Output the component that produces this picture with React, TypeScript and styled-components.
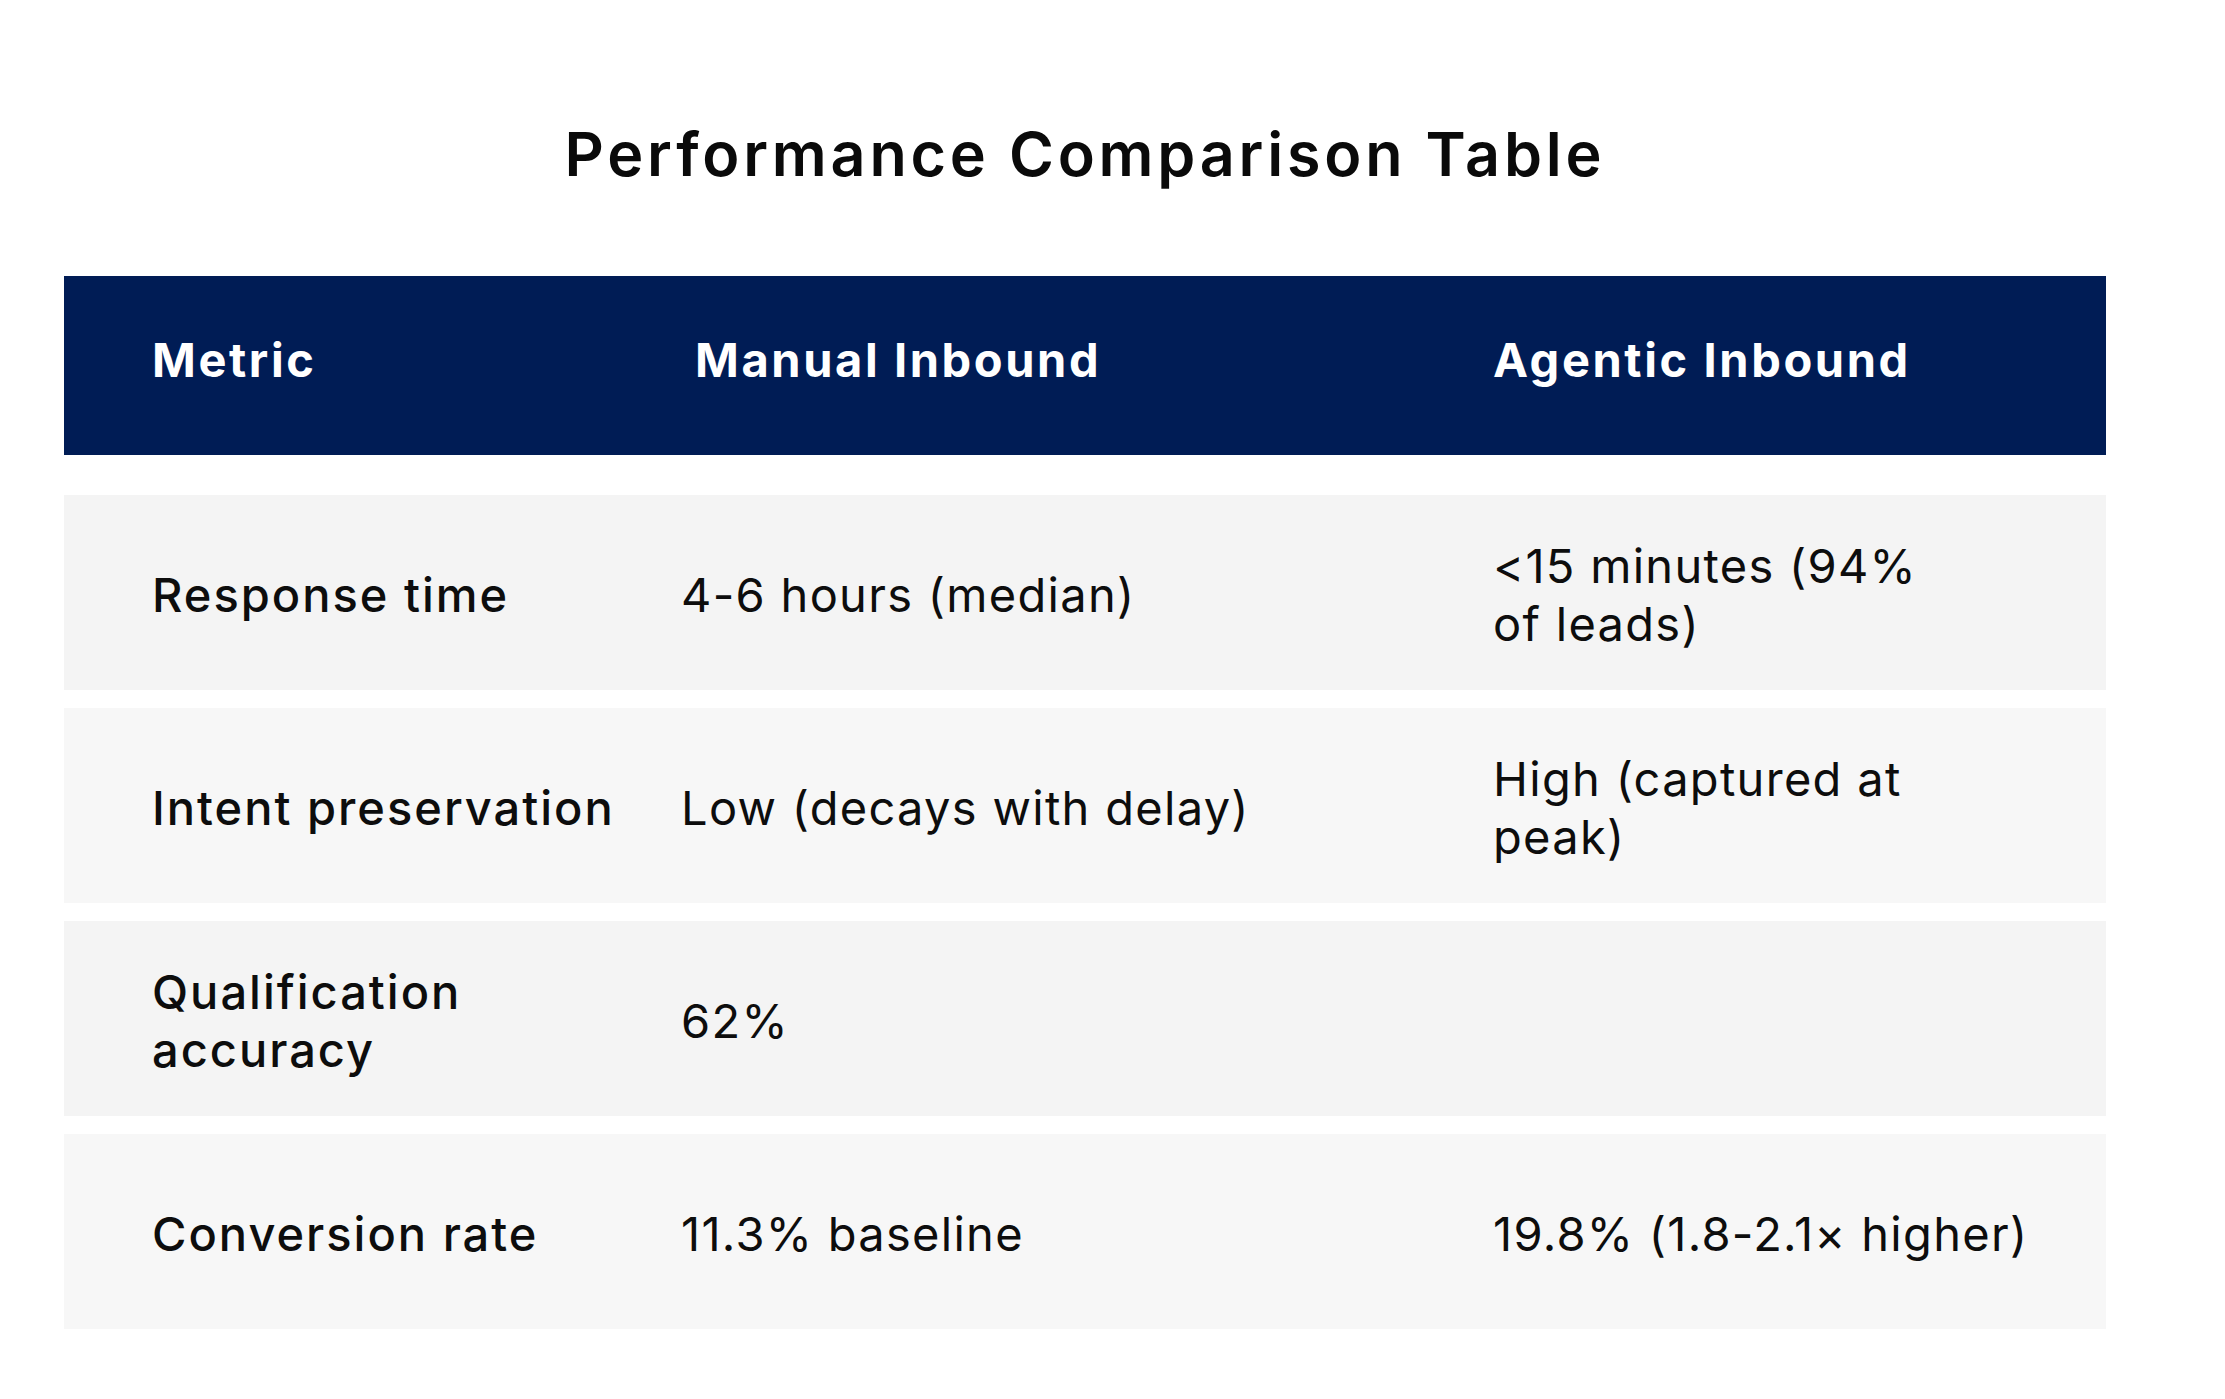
import React from "react";
import styled, { createGlobalStyle } from "styled-components";

const GlobalStyle = createGlobalStyle`
    html, body {
        margin: 0;
        padding: 0;
        background: #ffffff;
    }
    body {
        font-family: Inter, "Open Sans", "Liberation Sans", sans-serif;
        color: #111111;
    }
`;

const Page = styled.div`
    width: 2042px;
    padding: 118px 0 60px 64px;
`;

const Title = styled.h1`
    margin: 0 0 86px;
    text-align: center;
    font-size: 61px;
    font-weight: 600;
    letter-spacing: 3.8px;
    line-height: 72px;
    color: #0a0a0a;
`;

const Table = styled.div`
    display: flex;
    flex-direction: column;
    gap: 18px;
`;

const Row = styled.div<{ variant?: "head" | "odd" | "even" }>`
    display: grid;
    grid-template-columns: 470px 753px 525px;
    column-gap: 59px;
    align-items: center;
    padding: ${(p) => (p.variant === "head" ? "0 88px 12px" : "4px 88px 0")};
    box-sizing: border-box;
    height: ${(p) => (p.variant === "head" ? "179px" : "195px")};
    background: ${(p) =>
        p.variant === "head" ? "#001c55" : p.variant === "odd" ? "#f4f4f4" : "#f7f7f7"};
    margin-bottom: ${(p) => (p.variant === "head" ? "22px" : "0")};
`;

const HeadCell = styled.div<{ shift?: number }>`
    padding-left: ${(p) => p.shift ?? 0}px;
    color: #ffffff;
    font-size: 47px;
    font-weight: 700;
    letter-spacing: 2.6px;
    line-height: 58px;
`;

const Cell = styled.div<{ strong?: boolean }>`
    font-size: 47px;
    font-weight: ${(p) => (p.strong ? 500 : 400)};
    letter-spacing: ${(p) => (p.strong ? "2px" : "1.3px")};
    line-height: 58px;
    color: #0d0d0d;
`;

const Line = styled.span`
    display: block;
    white-space: nowrap;
`;

type TRow = { metric: string[]; manual: string[]; agentic: string[] };

const rows: TRow[] = [
    { metric: ["Response time"], manual: ["4-6 hours (median)"], agentic: ["<15 minutes (94%", "of leads)"] },
    { metric: ["Intent preservation"], manual: ["Low (decays with delay)"], agentic: ["High (captured at", "peak)"] },
    { metric: ["Qualification", "accuracy"], manual: ["62%"], agentic: [] },
    { metric: ["Conversion rate"], manual: ["11.3% baseline"], agentic: ["19.8% (1.8-2.1× higher)"] },
];

function Lines({ text }: { text: string[] }) {
    return (
        <>
            {text.map((t) => (
                <Line key={t}>{t}</Line>
            ))}
        </>
    );
}

export default function App() {
    return (
        <Page>
            <GlobalStyle />
            <Title>Performance Comparison Table</Title>
            <Table>
                <Row variant="head">
                    <HeadCell>Metric</HeadCell>
                    <HeadCell shift={14}>Manual Inbound</HeadCell>
                    <HeadCell>Agentic Inbound</HeadCell>
                </Row>
                {rows.map((r, i) => (
                    <Row key={r.metric.join(" ")} variant={i % 2 === 0 ? "odd" : "even"}>
                        <Cell strong>
                            <Lines text={r.metric} />
                        </Cell>
                        <Cell>
                            <Lines text={r.manual} />
                        </Cell>
                        <Cell>
                            <Lines text={r.agentic} />
                        </Cell>
                    </Row>
                ))}
            </Table>
        </Page>
    );
}
